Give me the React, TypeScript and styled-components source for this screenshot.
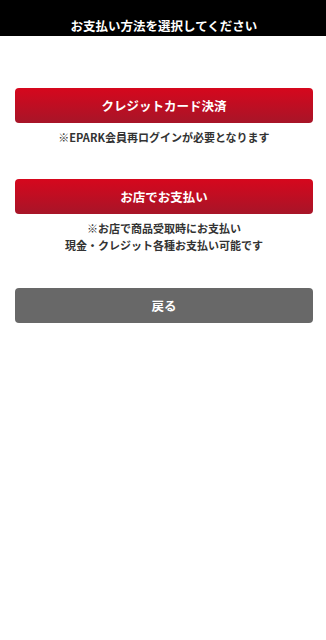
import React from "react";
import styled, { createGlobalStyle } from "styled-components";

const Global = createGlobalStyle`
  html, body { margin: 0; padding: 0; background: #fff; }
  body { font-family: "Noto Sans CJK JP", "Noto Sans", sans-serif; -webkit-font-smoothing: antialiased; }
`;

const Page = styled.div`
  width: 326px;
  min-height: 640px;
  background: #fff;
`;

const Header = styled.header`
  height: 36px;
  background: #000;
  color: #fff;
  display: flex;
  align-items: flex-end;
  justify-content: center;
  padding: 0 13px 2px 15px;
  box-sizing: border-box;
  font-size: 12.5px;
  font-weight: 700;
  line-height: 16px;
`;

const Content = styled.main`
  padding: 52px 13px 0 15px;
  display: flex;
  flex-direction: column;
`;

const Option = styled.section<{ $gap: number }>`
  display: flex;
  flex-direction: column;
  margin-bottom: ${(p) => p.$gap}px;
`;

const Button = styled.button<{ $variant: "red" | "gray" }>`
  width: 100%;
  height: 35px;
  border: none;
  border-radius: 4px;
  color: #fff;
  font-family: inherit;
  font-size: 12.5px;
  font-weight: 700;
  display: flex;
  align-items: center;
  justify-content: center;
  padding: 0;
  background: ${(p) =>
    p.$variant === "red"
      ? "linear-gradient(to bottom, #d6071d 0%, #a71528 100%)"
      : "#686868"};
`;

const Note = styled.p`
  margin: 6px 0 0;
  text-align: center;
  color: #333;
  font-size: 11px;
  font-weight: 700;
  line-height: 17px;
`;

export default function App() {
  return (
    <>
      <Global />
      <Page>
        <Header>お支払い方法を選択してください</Header>
        <Content>
          <Option $gap={33}>
            <Button $variant="red">クレジットカード決済</Button>
            <Note>※EPARK会員再ログインが必要となります</Note>
          </Option>
          <Option $gap={34}>
            <Button $variant="red">お店でお支払い</Button>
            <Note>
              ※お店で商品受取時にお支払い
              <br />
              現金・クレジット各種お支払い可能です
            </Note>
          </Option>
          <Option $gap={0}>
            <Button $variant="gray">戻る</Button>
          </Option>
        </Content>
      </Page>
    </>
  );
}
